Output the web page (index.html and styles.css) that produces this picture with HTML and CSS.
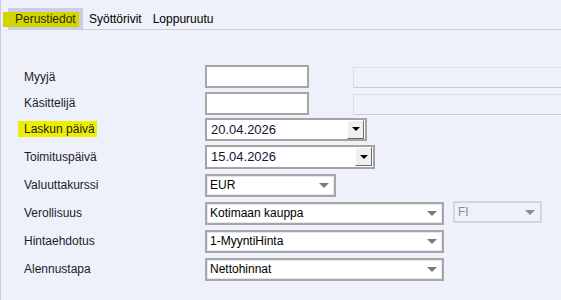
FILE: index.html
```html
<!DOCTYPE html>
<html lang="fi">
<head>
  <meta charset="UTF-8">
  <title>Perustiedot</title>
  <link rel="stylesheet" href="styles.css">
</head>
<body>
<div class="page">
  <div class="tabs">
    <div class="tab active"><span class="mark">Perustiedot</span></div>
    <div class="tab">Syöttörivit</div>
    <div class="tab">Loppuruutu</div>
  </div>

  <div class="form">
    <div class="row r1">
      <label class="lbl">Myyjä</label>
      <div class="txt"></div>
      <div class="txt-off"></div>
    </div>
    <div class="row r2">
      <label class="lbl">Käsittelijä</label>
      <div class="txt"></div>
      <div class="txt-off"></div>
    </div>
    <div class="row r3">
      <label class="lbl"><span class="mark mark-lbl">Laskun päivä</span></label>
      <div class="date d1">
        <span class="val">20.04.2026</span>
        <span class="btn"><i class="tri-b"></i></span>
      </div>
    </div>
    <div class="row r4">
      <label class="lbl">Toimituspäivä</label>
      <div class="date d2">
        <span class="val">15.04.2026</span>
        <span class="btn"><i class="tri-b"></i></span>
      </div>
    </div>
    <div class="row">
      <label class="lbl">Valuuttakurssi</label>
      <div class="sel short"><span class="val">EUR</span><i class="tri"></i></div>
    </div>
    <div class="row">
      <label class="lbl">Verollisuus</label>
      <div class="sel"><span class="val">Kotimaan kauppa</span><i class="tri"></i></div>
      <div class="sel sel-off"><span class="val">FI</span><i class="tri"></i></div>
    </div>
    <div class="row">
      <label class="lbl">Hintaehdotus</label>
      <div class="sel"><span class="val">1-MyyntiHinta</span><i class="tri"></i></div>
    </div>
    <div class="row">
      <label class="lbl">Alennustapa</label>
      <div class="sel"><span class="val">Nettohinnat</span><i class="tri"></i></div>
    </div>
  </div>
</div>
</body>
</html>
```

FILE: styles.css
```css
*{
  margin: 0;
  padding: 0;
  box-sizing: border-box;
}
body{
  background: #eef1f9;
  font-family: "Liberation Sans", Arial, sans-serif;
  font-size: 12px;
  color: #1c1c28;
  overflow: hidden;
}
.page{
  height: 300px;
  border-left: 1px solid #c6c9e6;
  overflow: hidden;
}

/* tabs */
.tabs{
  display: flex;
  margin: 8px 0 0 7px;
  height: 22px;
  border-bottom: 1px solid #cfd0d6;
}
.tab{
  height: 21px;
  line-height: 22px;
  padding: 0 5px 0 6px;
  color: #000;
}
.tab.active{
  height: 22px;
  margin-bottom: -1px;
  width: 75px;
  padding: 0 7px;
  background: #c9cee2;
}
.mark{
  display: inline-block;
  line-height: 15px;
  margin-left: -12px;
  padding: 0 3px 0 12px;
  background: #d2d500;
  color: #2e2e00;
}
.mark-lbl{
  line-height: 16px;
  margin-left: -6px;
  padding: 0 2px 0 6px;
  background: #eeee00;
  color: #1c1c28;
}

/* form */
.form{
  padding: 33px 0 0 23px;
}
.row{
  display: flex;
  align-items: center;
  height: 28px;
}
.row > *{
  flex-shrink: 0;
}
.r1{ height: 27px; }
.r2{ height: 26px; }
.r3{ height: 26px; }
.r4{ height: 29px; }
.lbl{
  width: 181px;
}
.txt{
  width: 104px;
  height: 23px;
  background: #fff;
  border: 2px solid #a6a6a6;
}
.txt-off{
  width: 230px;
  height: 21px;
  margin: 2px 0 0 44px;
  border: 1px solid #dcdfe6;
  border-bottom-color: #c3cbee;
}

.date{
  display: flex;
  align-items: center;
  height: 23px;
  background: #fff;
  border: 2px solid #a3a3a3;
}
.d1{ width: 162px; }
.d2{ width: 170px; height: 24px; }
.val{
  flex: 1;
  padding-left: 4px;
  font-size: 13px;
  color: #141432;
}
.btn{
  display: flex;
  align-items: center;
  justify-content: center;
  width: 17px;
  height: 19px;
  margin-right: 1px;
  background: #f0f0f0;
  border: 1px solid;
  border-color: #fff #6b6b6b #6b6b6b #fff;
}
.tri-b{
  width: 0;
  height: 0;
  border-left: 4px solid transparent;
  border-right: 4px solid transparent;
  border-top: 4px solid #000;
}

.sel{
  display: flex;
  align-items: center;
  width: 239px;
  height: 23px;
  background: #fff;
  border: 2px solid #a7a7a7;
  box-shadow: inset 0 0 0 1px #e2e6f0;
}
.sel .val{
  padding-left: 3px;
  font-size: 12px;
  color: #000;
}
.short{ width: 131px; }
.tri{
  width: 0;
  height: 0;
  margin-right: 5px;
  border-left: 5px solid transparent;
  border-right: 5px solid transparent;
  border-top: 5px solid #7b7b7b;
}
.sel-off{
  width: 89px;
  height: 22px;
  margin: -2px 0 0 9px;
  background: transparent;
  border-color: #cfd6ec;
  box-shadow: none;
}
.sel-off .val{
  color: #8a8a8a;
}
.sel-off .tri{
  border-top-color: #8a8a8a;
}
```
